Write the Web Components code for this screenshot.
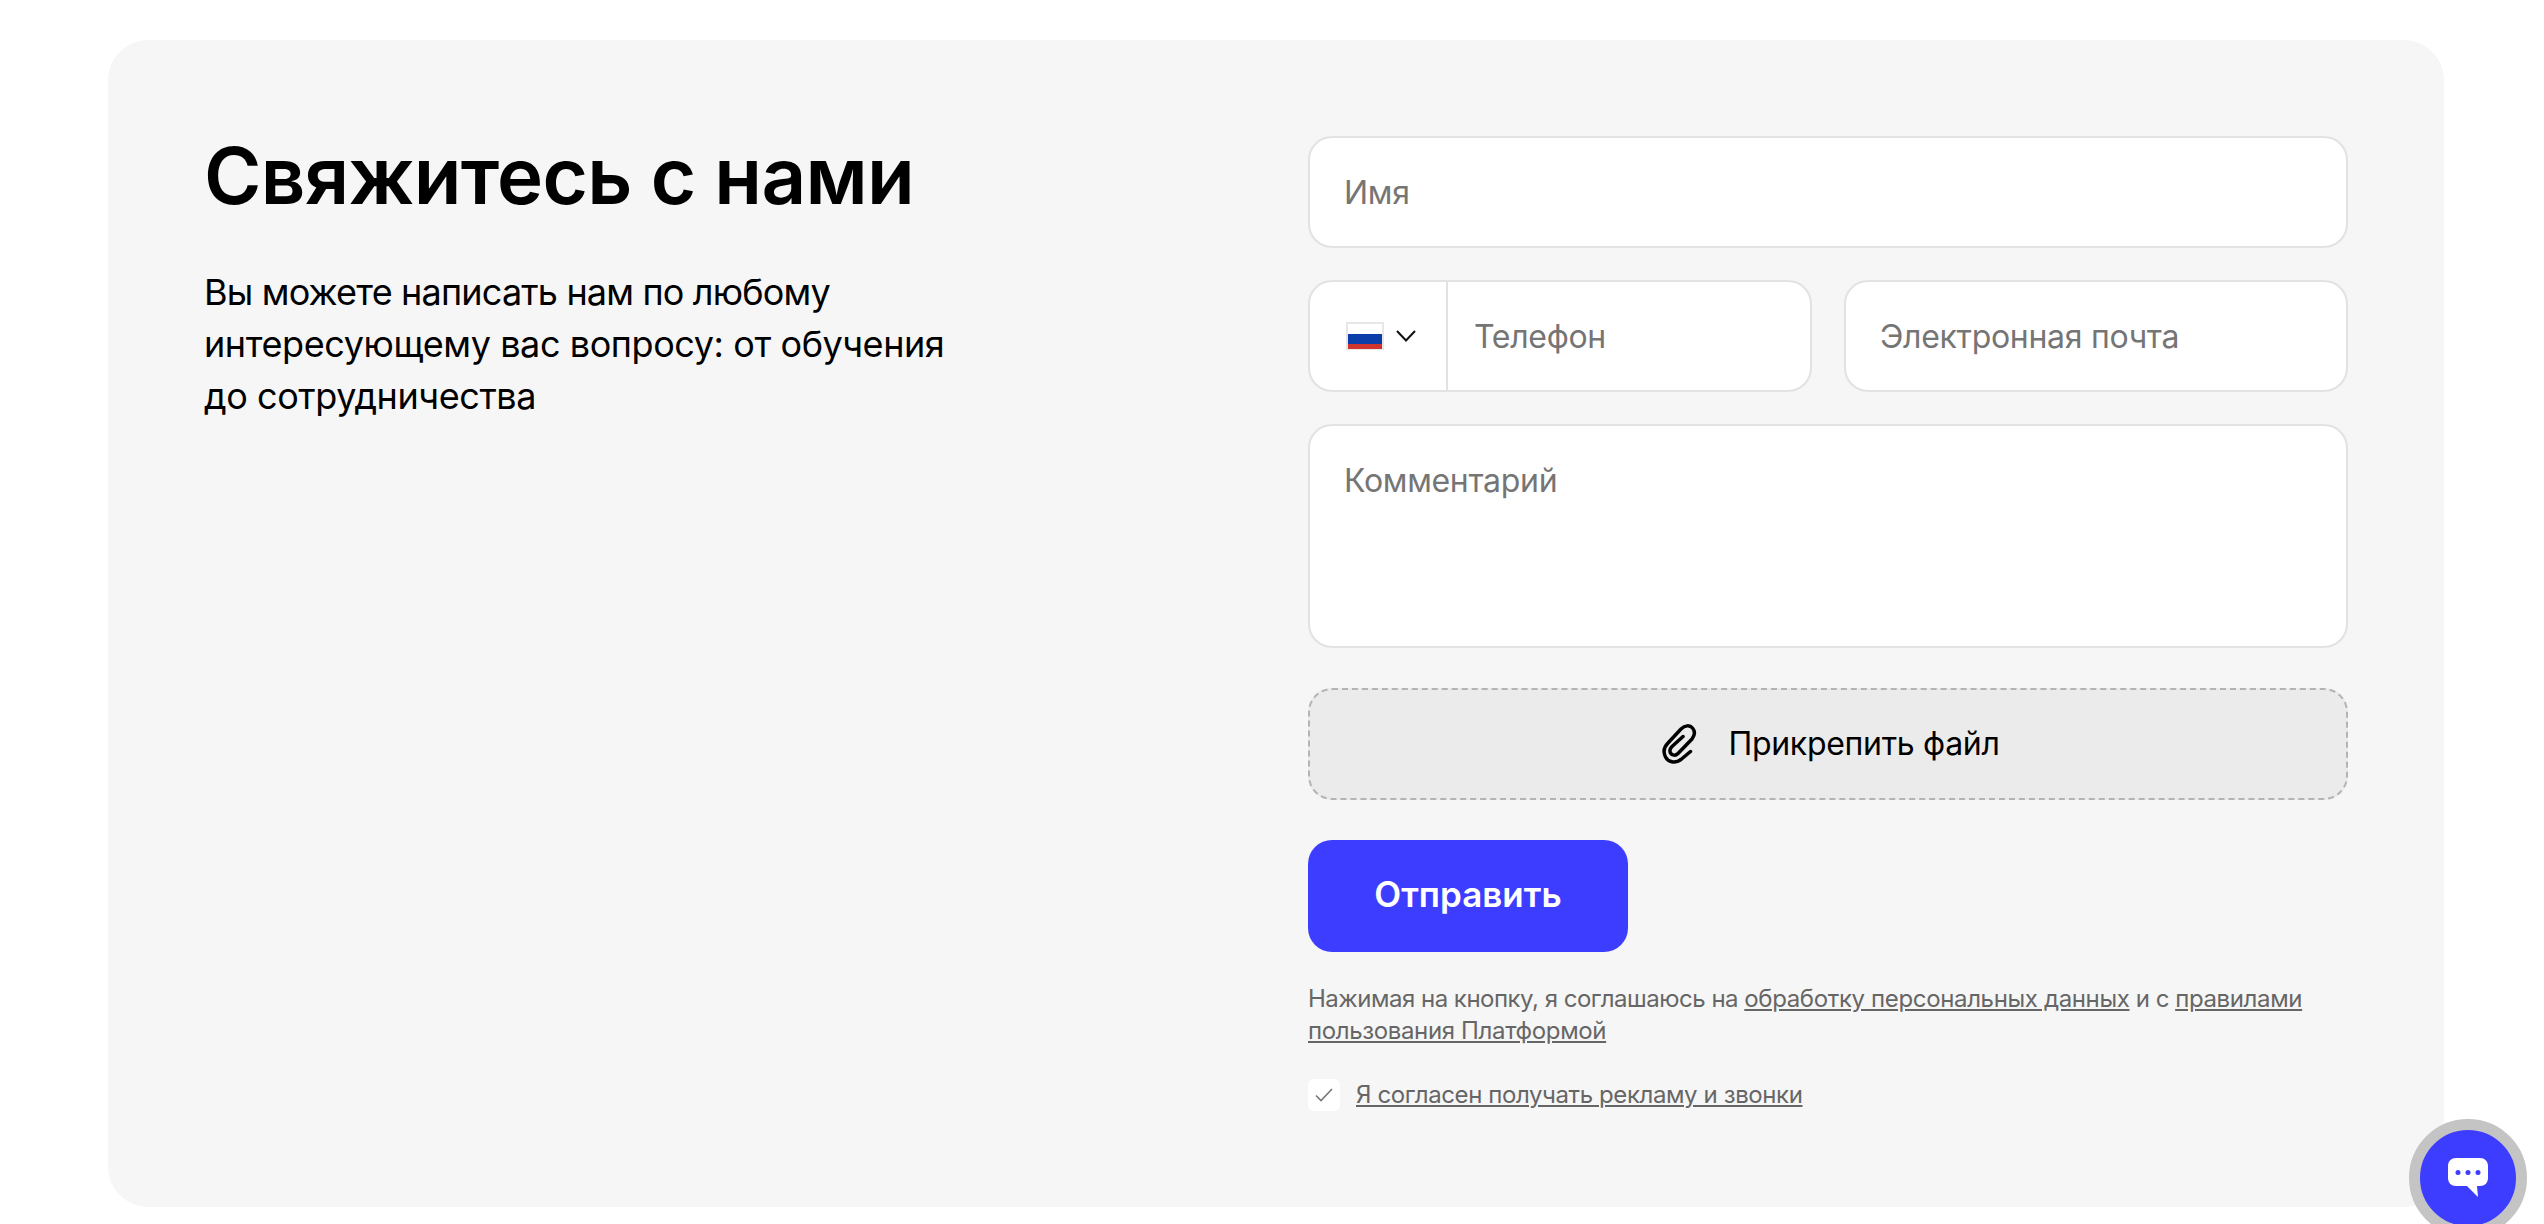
<!doctype html>
<html lang="ru">
<head>
<meta charset="utf-8">
<title>Свяжитесь с нами</title>
<style>
  html, body { margin: 0; height: 100%; overflow: hidden; background: #fff; }
  body { font-family: Inter, "Noto Sans", sans-serif; color: #000; }
</style>
</head>
<body>
<contact-card>
  <span slot="title">Свяжитесь с нами</span>
  <span slot="lead"><span style="letter-spacing:-0.82px">Вы можете написать нам по любому</span><br>интересующему вас вопросу: от обучения<br>до сотрудничества</span>
  <text-field label="Имя"></text-field>
  <div style="display:flex;gap:32px">
    <phone-field label="Телефон" style="flex:0 0 504px"></phone-field>
    <text-field label="Электронная почта" style="flex:1"></text-field>
  </div>
  <text-field label="Комментарий" multiline></text-field>
  <attach-button style="margin-top:8px">Прикрепить файл</attach-button>
  <send-button style="margin-top:8px">Отправить</send-button>
  <legal-note>Нажимая на кнопку, я соглашаюсь на <a>обработку персональных данных</a> и с <a>правилами пользования Платформой</a></legal-note>
  <consent-check>Я согласен получать рекламу и звонки</consent-check>
</contact-card>
<chat-button></chat-button>

<script>
// small helper, every element just stamps its html in an open shadow root
class Base extends HTMLElement {
  constructor() {
    super();
    this.attachShadow({ mode: "open" }).innerHTML = this.markup();
  }
}

const fieldBox = `
  box-sizing: border-box;
  background: #fff;
  border: 2px solid #e2e2e2;
  border-radius: 24px;
  font-size: 32px;
  letter-spacing: -0.3px;
  color: #757575;
`;

class ContactCard extends Base {
  markup() {
    return `
      <style>
        :host {
          display: flex;
          justify-content: space-between;
          box-sizing: border-box;
          margin: 40px 0 0 108px;
          width: 2336px;
          height: 1167px;
          padding: 96px 96px 0 96px;
          background: #f6f6f6;
          border-radius: 40px;
        }
        .intro { width: 800px; }
        h1 {
          margin: -4px 0 46px;
          font-size: 78px;
          line-height: 88px;
          font-weight: 600;
          letter-spacing: -0.7px;
        }
        p { margin: 0; font-size: 36px; line-height: 52px; letter-spacing: -0.42px; }
        .form { width: 1040px; display: flex; flex-direction: column; gap: 32px; }
      </style>
      <div class="intro">
        <h1><slot name="title"></slot></h1>
        <p><slot name="lead"></slot></p>
      </div>
      <div class="form"><slot></slot></div>
    `;
  }
}

class TextField extends Base {
  markup() {
    const tall = this.hasAttribute("multiline");
    return `
      <style>
        :host { display: block; }
        div {
          ${fieldBox}
          height: ${tall ? 224 : 112}px;
          padding: ${tall ? "35px" : "0"} 34px 0;
          display: flex;
          align-items: ${tall ? "flex-start" : "center"};
        }
      </style>
      <div>${this.getAttribute("label")}</div>
    `;
  }
}

class PhoneField extends Base {
  markup() {
    return `
      <style>
        :host { display: block; }
        .box { ${fieldBox} height: 112px; display: flex; align-items: stretch; }
        .code {
          width: 138px;
          flex: none;
          box-sizing: border-box;
          padding-left: 36px;
          border-right: 2px solid #e2e2e2;
          display: flex;
          align-items: center;
          gap: 12px;
        }
        .label { padding-left: 26px; display: flex; align-items: center; }
        svg { display: block; }
      </style>
      <div class="box">
        <div class="code">
          <svg width="38" height="28" viewBox="0 0 38 28">
            <rect width="38" height="28" fill="#e9e6e8"/>
            <rect x="2" y="2" width="34" height="10" fill="#fff"/>
            <rect x="2" y="12" width="34" height="10" fill="#0b3ea8"/>
            <rect x="2" y="22" width="34" height="5" fill="#cf352e"/>
          </svg>
          <svg width="20" height="12" viewBox="0 0 20 12" fill="none" stroke="#111" stroke-width="2">
            <path d="M1 1l9 9.500 9-9.500"/>
          </svg>
        </div>
        <div class="label">${this.getAttribute("label")}</div>
      </div>
    `;
  }
}

class AttachButton extends Base {
  markup() {
    return `
      <style>
        :host {
          display: flex;
          align-items: center;
          justify-content: center;
          gap: 30px;
          box-sizing: border-box;
          height: 112px;
          padding-left: 6px;
          background: #ebebeb;
          border: 2px dashed #b4b4b4;
          border-radius: 24px;
          font-size: 32px;
          letter-spacing: -0.3px;
          color: #000;
        }
        svg { display: block; }
        span { position: relative; top: -1px; }
      </style>
      <svg width="36" height="40" viewBox="0 0 36 40" fill="none" stroke="#000" stroke-width="3.500" stroke-linecap="round" stroke-linejoin="round">
        <path d="M28.500 27.500L19 35.500C13 40 6 38 3.500 33C1 28 2 23 6 19L19 5C23 1 28 1 30.500 4C33 7 33 11 30 15L16 29.500C13.500 32 10 31.500 8.500 29C7.500 27 8 24.500 10 22.500L21 12.500"/>
      </svg>
      <span><slot></slot></span>
    `;
  }
}

class SendButton extends Base {
  markup() {
    return `
      <style>
        :host {
          display: flex;
          align-items: center;
          justify-content: center;
          width: 320px;
          height: 112px;
          background: #3d3dff;
          border-radius: 24px;
          color: #fff;
          font-size: 35px;
          font-weight: 600;
        }
        span { position: relative; top: -2px; }
      </style>
      <span><slot></slot></span>
    `;
  }
}

class LegalNote extends Base {
  markup() {
    return `
      <style>
        :host {
          display: block;
          margin-top: -1px;
          font-size: 24px;
          line-height: 32px;
          letter-spacing: -0.5px;
          color: #666;
        }
        ::slotted(a) { text-decoration: underline; color: #666; letter-spacing: -0.36px; }
      </style>
      <slot></slot>
    `;
  }
}

class ConsentCheck extends Base {
  markup() {
    return `
      <style>
        :host {
          display: flex;
          align-items: center;
          gap: 16px;
          font-size: 24px;
          line-height: 32px;
          letter-spacing: -0.4px;
          color: #666;
        }
        .tick {
          width: 32px;
          height: 32px;
          background: #fff;
          border-radius: 6px;
          display: flex;
          align-items: center;
          justify-content: center;
        }
        span { text-decoration: underline; }
      </style>
      <div class="tick">
        <svg width="18" height="14" viewBox="0 0 18 14" fill="none" stroke="#777" stroke-width="1.600">
          <path d="M1 7.500l5 5L17 1"/>
        </svg>
      </div>
      <span><slot></slot></span>
    `;
  }
}

class ChatButton extends Base {
  markup() {
    return `
      <style>
        :host {
          position: fixed;
          left: 2409px;
          top: 1119px;
          width: 96px;
          height: 96px;
          border: 11px solid #c4c4c4;
          border-radius: 50%;
          background: #3d3dff;
          display: flex;
          align-items: center;
          justify-content: center;
        }
        svg { display: block; }
      </style>
      <svg width="40" height="40" viewBox="0 0 40 40">
        <path fill="#fff" d="M8 0h24c4.500 0 8 3 8 8v12c0 5-3.500 8-8 8h-3l1 11-11-11H8c-4.500 0-8-3-8-8V8c0-5 3.500-8 8-8z"/>
        <circle cx="10" cy="14.500" r="2.500" fill="#3d3dff"/>
        <circle cx="20" cy="14.500" r="2.500" fill="#3d3dff"/>
        <circle cx="30" cy="14.500" r="2.500" fill="#3d3dff"/>
      </svg>
    `;
  }
}

customElements.define("contact-card", ContactCard);
customElements.define("text-field", TextField);
customElements.define("phone-field", PhoneField);
customElements.define("attach-button", AttachButton);
customElements.define("send-button", SendButton);
customElements.define("legal-note", LegalNote);
customElements.define("consent-check", ConsentCheck);
customElements.define("chat-button", ChatButton);
</script>
</body>
</html>
